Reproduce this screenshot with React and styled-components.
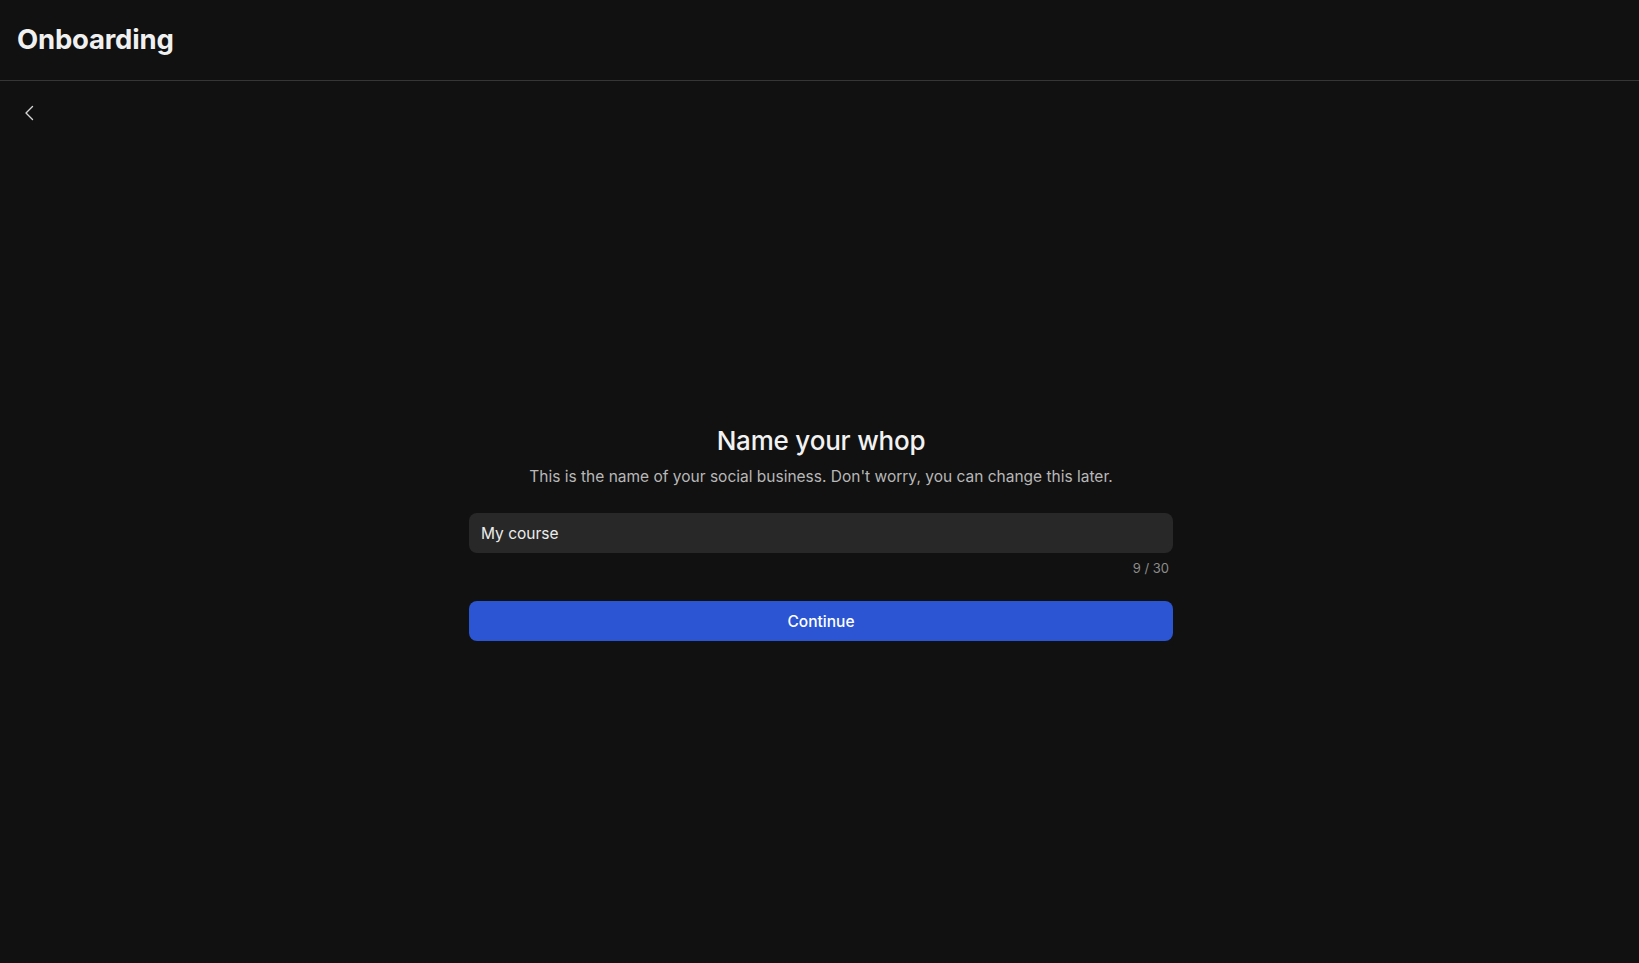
import React, { useState } from 'react';
import styled, { createGlobalStyle } from 'styled-components';

const GlobalStyle = createGlobalStyle`
  html, body {
    margin: 0;
    padding: 0;
    background: #111111;
  }
  body {
    font-family: Inter, "Noto Sans", sans-serif;
    color: #ededed;
  }
  * { box-sizing: border-box; }
`

const Page = styled.div`
  min-height: 963px;
  display: flex;
  flex-direction: column;
  background: #111111;
`

const Header = styled.header`
  height: 81px;
  display: flex;
  align-items: center;
  padding: 0 17px 3px;
  border-bottom: 1px solid #363636;
`

const HeaderTitle = styled.h1`
  margin: 0;
  font-size: 27.5px;
  font-weight: 700;
  color: #f0f0f0;
  letter-spacing: -0.2px;
`

const Body = styled.main`
  flex: 1;
  display: flex;
  flex-direction: column;
`

const BackRow = styled.div`
  padding: 20px 0 0 18px;
  height: 60px;
`

const BackButton = styled.button`
  width: 24px;
  height: 24px;
  padding: 0;
  border: none;
  background: transparent;
  color: #d6d6d6;
  display: flex;
  align-items: center;
  justify-content: center;
  cursor: pointer;
`

const Center = styled.div`
  flex: 1;
  display: flex;
  justify-content: center;
  padding: 283px 0 0 3px;
`

const Form = styled.div`
  width: 704px;
  display: flex;
  flex-direction: column;
  align-items: center;
`

const Title = styled.h2`
  margin: 0;
  font-size: 26px;
  font-weight: 500;
  line-height: 34px;
  color: #f2f2f2;
  letter-spacing: -0.2px;
`

const Subtitle = styled.p`
  margin: 8px 0 0;
  font-size: 15.5px;
  line-height: 22px;
  color: #b8b8b8;
`

const Field = styled.div`
  width: 100%;
  margin-top: 25px;
  display: flex;
  flex-direction: column;
`

const Input = styled.input`
  width: 100%;
  height: 40px;
  border: none;
  outline: none;
  border-radius: 8px;
  background: #282828;
  color: #ececec;
  padding: 0 12px;
  font-family: Inter, "Noto Sans", sans-serif;
  font-size: 15.5px;
`

const Counter = styled.div`
  align-self: flex-end;
  margin: 6px 4px 0 0;
  font-size: 13px;
  line-height: 18px;
  color: #8c8c8c;
`

const Primary = styled.button`
  width: 100%;
  height: 40px;
  margin-top: 24px;
  border: none;
  border-radius: 8px;
  background: #2b55d3;
  color: #ffffff;
  font-family: Inter, "Noto Sans", sans-serif;
  font-size: 15.5px;
  font-weight: 500;
  cursor: pointer;
`

export default function App() {
  const [name, setName] = useState('My course')

  return (
    <>
      <GlobalStyle />
      <Page>
        <Header>
          <HeaderTitle>Onboarding</HeaderTitle>
        </Header>
        <Body>
          <BackRow>
            <BackButton aria-label="Back">
              <svg width="18" height="18" viewBox="0 0 18 18" fill="none">
                <path d="M11.5 2.5L5 9l6.5 6.5" stroke="currentColor" strokeWidth="1.4" strokeLinecap="round" strokeLinejoin="round" />
              </svg>
            </BackButton>
          </BackRow>
          <Center>
            <Form>
              <Title>Name your whop</Title>
              <Subtitle>This is the name of your social business. Don't worry, you can change this later.</Subtitle>
              <Field>
                <Input value={name} maxLength={30} onChange={e => setName(e.target.value)} />
                <Counter>{name.length} / 30</Counter>
              </Field>
              <Primary>Continue</Primary>
            </Form>
          </Center>
        </Body>
      </Page>
    </>
  )
}
